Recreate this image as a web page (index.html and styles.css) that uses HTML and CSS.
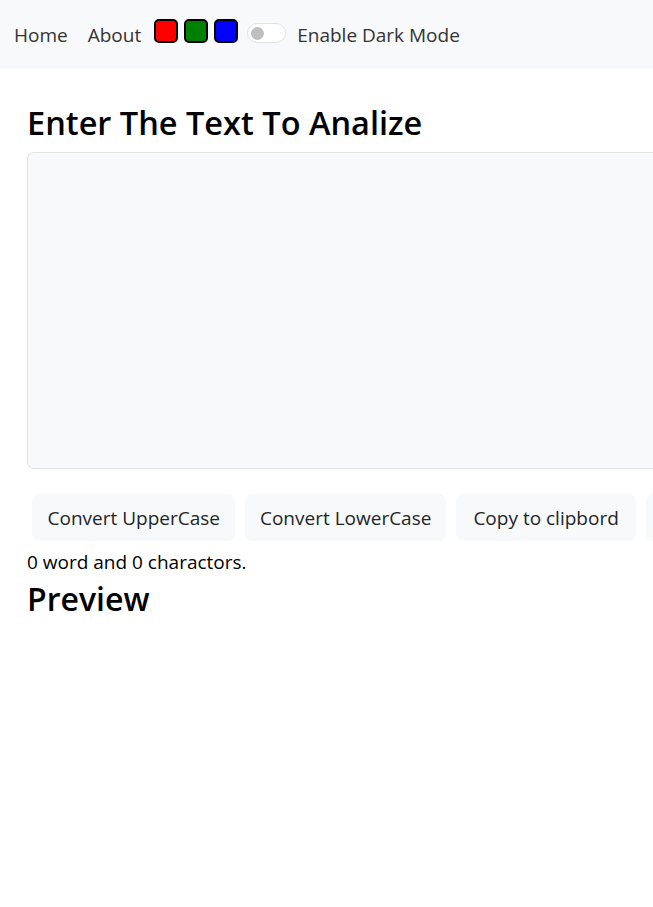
FILE: index.html
```html
<!DOCTYPE html>
<html>
<head>
<meta charset="utf-8">
<link rel="stylesheet" href="styles.css">
</head>
<body>
<nav class="navbar">
  <a class="nav-link" href="#">Home</a>
  <a class="nav-link" href="#">About</a>
  <div class="swatches">
    <span class="swatch red"></span>
    <span class="swatch green"></span>
    <span class="swatch blue"></span>
  </div>
  <label class="switch">
    <span class="track"><span class="knob"></span></span>
    <span class="switch-label">Enable Dark Mode</span>
  </label>
</nav>
<main class="container">
  <h1 class="title">Enter The Text To Analize</h1>
  <textarea class="textbox"></textarea>
  <div class="buttons">
    <button class="btn btn-upper">Convert UpperCase</button>
    <button class="btn btn-lower">Convert LowerCase</button>
    <button class="btn btn-copy">Copy to clipbord</button>
    <button class="btn">Remove Extra Spaces</button>
  </div>
  <p class="summary">0 word and 0 charactors.</p>
  <h2 class="preview">Preview</h2>
</main>
</body>
</html>
```
FILE: styles.css
```css
* { box-sizing: border-box; }
html, body { margin: 0; padding: 0; overflow: hidden; }
body {
  font-family: "Open Sans", "Noto Sans", sans-serif;
  color: #212529;
  background: #fff;
  width: 653px;
}
.navbar {
  display: flex;
  align-items: center;
  height: 69px;
  background: #f8f9fa;
  padding: 0 0 0 14px;
  font-size: 19px;
}
.nav-link {
  color: #333;
  text-decoration: none;
  margin-right: 20px;
}
.nav-link + .nav-link { margin-right: 13px; }
.swatches {
  display: flex;
  gap: 6px;
  margin-top: -8px;
}
.swatch {
  width: 24px;
  height: 24px;
  border: 2px solid #000;
  border-radius: 5px;
}
.red { background: #f00; }
.green { background: #008000; }
.blue { background: #00f; }
.switch {
  display: flex;
  align-items: center;
  margin-left: 9px;
  white-space: nowrap;
}
.track {
  width: 39px;
  height: 20px;
  border: 1px solid #dee2e6;
  border-radius: 10px;
  background: #fff;
  display: flex;
  align-items: center;
  padding-left: 3px;
  margin-right: 11px;
  margin-top: -3px;
}
.knob {
  width: 13px;
  height: 13px;
  border-radius: 50%;
  background: #bfbfbf;
}
.switch-label { color: #333; }
.container {
  padding: 0 0 0 27px;
  width: 900px;
}
.title {
  font-size: 32.5px;
  font-weight: 600;
  margin: 34px 0 10px;
  line-height: 1.2;
  color: #000;
}
.textbox {
  display: block;
  width: 800px;
  height: 317px;
  background: #f8f9fa;
  border: 1px solid #dee2e6;
  border-radius: 7px;
  resize: none;
}
.buttons {
  display: flex;
  gap: 10px;
  margin: 25px 0 8px 5px;
}
.btn {
  font-family: inherit;
  font-size: 19px;
  color: #212529;
  background: #f8f9fa;
  border: none;
  border-radius: 7px;
  height: 47px;
  padding: 1px 16px 0;
  white-space: nowrap;
}
.btn-upper { padding: 1px 15.5px 0; }
.btn-lower { padding: 1px 14.5px 0; }
.btn-copy { padding: 1px 17.5px 0; }
.summary {
  margin: 0;
  font-size: 19px;
  color: #000;
}
.preview {
  font-size: 32px;
  font-weight: 600;
  margin: 2px 0 0;
  color: #000;
}
```
